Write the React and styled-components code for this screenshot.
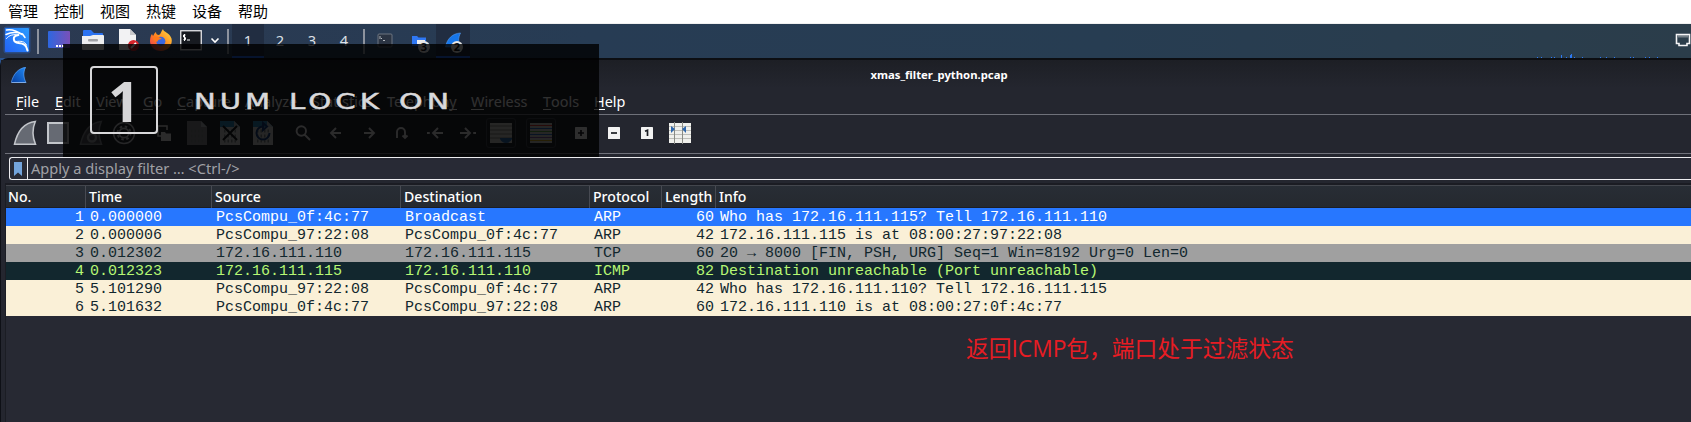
import React from 'react';
import styled, { createGlobalStyle } from 'styled-components';

const GlobalStyle = createGlobalStyle`
  * { box-sizing: border-box; }
  html, body { margin: 0; padding: 0; overflow: hidden; background: #272933; }
  svg { display: block; flex: none; }
`;

const ui = `"Noto Sans", "Noto Sans CJK SC", sans-serif`;

const Screen = styled.div`
  position: relative;
  width: 1691px;
  height: 422px;
  overflow: hidden;
  display: flex;
  flex-direction: column;
  font-family: ${ui};
  background: #2b5490;
`;

/* ---------- host menu ---------- */
const HostMenu = styled.nav`
  flex: none;
  height: 24px;
  padding-left: 8px;
  display: flex;
  gap: 16px;
  background: #fff;
  border-bottom: 1px solid #f0f0f0;
  color: #000;
  font: 15px/22px "Noto Sans CJK SC", sans-serif;
`;
const HostItem = styled.span`
  width: 30px;
  white-space: nowrap;
`;

/* ---------- desktop panel ---------- */
const Panel = styled.header`
  flex: none;
  height: 34px;
  display: flex;
  align-items: stretch;
  background: linear-gradient(90deg, #2b3951 0%, #273c54 35%, #273d52 65%, #2b3d4a 100%);
`;
const PanelSlot = styled.div`
  width: ${(p) => p.$w}px;
  flex: none;
  padding-bottom: 2px;
  display: flex;
  align-items: center;
  justify-content: center;
  background: ${(p) => (p.$active ? '#212d41' : 'transparent')};
  box-shadow: ${(p) => (p.$active ? 'inset 0 -2px #2067ee' : 'none')};
`;
const Divider = styled.div`
  width: 2px;
  height: 25px;
  margin: 5px 3px 0;
  background: #8d939e;
`;
const Workspace = styled(PanelSlot)`
  color: #dce0e6;
  font-size: 14.67px;
  line-height: 31px;
  padding-bottom: 2px;
`;
const Spacer = styled.div`
  flex: 1;
`;
const NetGraph = styled.div`
  width: 124px;
  margin-right: 14px;
  display: flex;
  align-items: flex-end;
`;

/* ---------- window ---------- */
const Window = styled.main`
  flex: 1;
  display: flex;
  flex-direction: column;
  border-left: 1px solid #0e1016;
  border-top: 2px solid #0c0e12;
  border-top-left-radius: 8px;
  background: #24262f;
`;
const TitleBar = styled.div`
  flex: none;
  height: 31px;
  padding: 0 0 2px 10px;
  display: grid;
  grid-template-columns: 16px 1824px;
  align-items: center;
  background: linear-gradient(#1d1f25, #24262f 90%);
`;
const Title = styled.h1`
  margin: 0;
  text-align: center;
  color: #fff;
  font-size: 11.3px;
  font-weight: 700;
  line-height: 16px;
`;
const MenuBar = styled.nav`
  flex: none;
  height: 24px;
  margin-left: 4px;
  padding-left: 11px;
  display: flex;
  border-bottom: 1px solid #6f717a;
  color: #fff;
  font-size: 14.4px;
  line-height: 21px;
`;
const MenuItem = styled.span`
  width: ${(p) => p.$w}px;
  flex: none;
  white-space: nowrap;
`;
const Mnemonic = styled.span`
  display: inline-block;
  height: 19px;
  line-height: 21px;
  border-bottom: 1px solid currentColor;
`;
const ToolBar = styled.div`
  flex: none;
  height: 39px;
  margin-left: 4px;
  padding: 0 0 2px 3px;
  display: flex;
  align-items: center;
  border-bottom: 1px solid #6f717a;
`;
const ToolSlot = styled.div`
  width: 33px;
  height: 30px;
  flex: none;
  margin-left: ${(p) => (p.$gap ? 7 : 0)}px;
  display: flex;
  align-items: center;
  justify-content: center;
`;
const ToggleFrame = styled.div`
  width: 30px;
  height: 30px;
  flex: none;
  display: flex;
  align-items: center;
  justify-content: center;
  border: 1px solid #42454f;
  border-radius: 3px;
`;
const FilterBar = styled.div`
  flex: none;
  height: 23px;
  margin: 3px 0 0 8px;
  display: flex;
  border: 1px solid #ededf0;
  border-right: 0;
  border-radius: 3px 0 0 3px;
  background: #282a35;
`;
const Bookmark = styled.div`
  width: 18px;
  padding-right: 1px;
  border-right: 1px solid #ededf0;
  display: flex;
  align-items: center;
  justify-content: center;
`;
const Placeholder = styled.span`
  padding-left: 3px;
  color: #a0a1a6;
  font-size: 14.6px;
  line-height: 21px;
  white-space: pre;
`;

/* ---------- packet list ---------- */
const PacketList = styled.section`
  flex: 1;
  margin: 3px 0 0 4px;
  border-left: 1px solid #1b1d24;
  border-top: 2px solid #1b1c23;
  background: #272933;
`;
const columns = `80px 126px 189px 189px 72px 54px 1fr`;
const HeaderRow = styled.div`
  display: grid;
  grid-template-columns: ${columns};
  height: 23px;
  border-top: 1px solid #43464d;
  border-bottom: 1px solid #1c1e24;
  background: linear-gradient(#282d35, #25292f);
`;
const HeaderCell = styled.div`
  padding-left: ${(p) => (p.$first ? 2 : 3)}px;
  border-right: 1px solid #474a52;
  color: #fff;
  font-size: 14.1px;
  font-weight: 500;
  line-height: 22px;
  white-space: nowrap;
  &:last-child { border-right: 0; }
`;
const tones = {
  selected: ['#2777ff', '#fff'],
  arp: ['#faf0d7', '#12272e'],
  tcp: ['#a0a0a0', '#12272e'],
  icmp: ['#12272e', '#b7f774'],
};
const PacketRow = styled.div`
  display: grid;
  grid-template-columns: ${columns};
  height: 18px;
  background: ${(p) => tones[p.$tone][0]};
  color: ${(p) => tones[p.$tone][1]};
  font: 15px/19px "Liberation Mono", monospace;
`;
const Cell = styled.span`
  padding: ${(p) => (p.$right ? '0 2px 0 0' : '0 0 0 4px')};
  text-align: ${(p) => (p.$right ? 'right' : 'left')};
  white-space: pre;
`;

/* ---------- overlays ---------- */
const Osd = styled.aside`
  position: absolute;
  left: 63px;
  top: 44px;
  width: 536px;
  height: 113px;
  padding: 22px 0 0 27px;
  display: flex;
  background: rgba(0, 0, 0, 0.81);
`;
const KeyCap = styled.div`
  width: 68px;
  height: 68px;
  flex: none;
  border: 2px solid #d8d8da;
  border-radius: 4px;
  display: flex;
  align-items: center;
  justify-content: center;
`;
const KeyDigit = styled.span`
  color: #d6d6d8;
  font: 700 56px/64px "Open Sans", sans-serif;
`;
const OsdText = styled.div`
  padding: 22px 0 0 36px;
  display: flex;
  color: #d9d9db;
  font: 400 22px/27px "DejaVu Sans", sans-serif;
`;
const OsdWord = styled.span`
  width: ${(p) => p.$w}px;
  flex: none;
  white-space: nowrap;
  letter-spacing: 3px;
  -webkit-text-stroke: 0.5px #d9d9db;
  transform: scaleX(${(p) => p.$stretch});
  transform-origin: left center;
`;
const Annotation = styled.p`
  position: absolute;
  left: 966px;
  top: 332px;
  margin: 0;
  color: #e81c23;
  font: 22.75px/34px "Open Sans", "Noto Sans CJK SC", sans-serif;
  white-space: nowrap;
`;

/* ---------- icons ---------- */
const KaliIcon = () => (
  <svg width="30" height="30" viewBox="0 0 30 30">
    <defs>
      <linearGradient id="kali" x1="0" y1="1" x2="1" y2="0">
        <stop offset="0" stopColor="#2463f5" /><stop offset="1" stopColor="#2a9bff" />
      </linearGradient>
    </defs>
    <rect x="1.5" y="1.5" width="27" height="27" rx="3" fill="#2a6fe8" opacity=".35" />
    <rect x="3" y="3" width="24" height="24" rx="1" fill="url(#kali)" />
    <g fill="none" stroke="#fff" strokeLinecap="round">
      <path d="M4.500 5C9 4 15 6 20 9.500" strokeWidth="1.400" />
      <path d="M4 9.500C9 7 15 7 20.500 9L23 12.500" strokeWidth="1.500" />
      <path d="M4.500 13.500C7 10 12 9 16 10" strokeWidth="1" />
      <path d="M16.500 10C9.500 11 11 17.500 16.500 18C22 18.500 24.500 20 25.500 25.500" strokeWidth="2" />
      <path d="M14 16.500C19 16 22.500 16 24.500 20" strokeWidth="1" />
    </g>
  </svg>
);
const DesktopIcon = () => (
  <svg width="22" height="18" viewBox="0 0 22 18">
    <defs><linearGradient id="dsk"><stop stopColor="#2d67e0" /><stop offset="1" stopColor="#7a50b8" /></linearGradient></defs>
    <rect width="22" height="17" rx="1" fill="url(#dsk)" />
    <path d="M8 14h2v2H8zM11 14h2v2h-2zM14 14h2v2h-2z" fill="#fff" />
  </svg>
);
const FolderIcon = () => (
  <svg width="22" height="20" viewBox="0 0 22 20">
    <path d="M1 1q0-1 1-1h7l3 3h8q1 0 1 1v5H1z" fill="#2b72f0" />
    <path d="M0 6h8l3-1h10q1 0 1 1v13q0 1-1 1H1q-1 0-1-1z" fill="#eeeeef" />
    <rect x="6" y="9" width="10" height="2.400" rx="1" fill="#a2a2a5" />
  </svg>
);
const DocumentIcon = () => (
  <svg width="22" height="22" viewBox="0 0 22 22">
    <path d="M2 0h11l6 6v15H2z" fill="#f2f2f3" />
    <path d="M13 0l6 6h-6z" fill="#c9c9cc" />
    <circle cx="16.500" cy="16.500" r="5.500" fill="#d7252c" />
    <path d="M14 19l5-5" stroke="#fff" strokeWidth="1.800" />
  </svg>
);
const FirefoxIcon = () => (
  <svg width="22" height="23" viewBox="0 0 22 23">
    <defs>
      <linearGradient id="ff" x1="1" y1="0" x2="0" y2="1">
        <stop stopColor="#ffe04a" /><stop offset=".5" stopColor="#ff8a20" /><stop offset="1" stopColor="#f02e55" />
      </linearGradient>
    </defs>
    <path d="M13 0c0 3 7 4 8.500 9.500C23 16 18 22 11 22S0 17 0 12c0-3 1-6 2-7l1 2c1-1 1-3 3-4 0 2 1 3 3 3 2-1 2-4 4-6z" fill="url(#ff)" />
    <circle cx="10.800" cy="12.300" r="4.600" fill="#3a68e0" />
    <path d="M3 8c4-1 6 0 9 2-3 0-4 1-5 3-3-1-4-3-4-5z" fill="#ff7a1c" />
  </svg>
);
const TerminalIcon = () => (
  <svg width="22" height="21" viewBox="0 0 22 21">
    <rect x=".75" y=".75" width="20.500" height="19" fill="#171a20" stroke="#e8e8ea" strokeWidth="1.300" />
    <path d="M5.500 5H3.500v2l2 .6v2h-2M4.500 4v7M7 10h3" fill="none" stroke="#fff" />
  </svg>
);
const ChevronIcon = () => (
  <svg width="10" height="7" viewBox="0 0 10 7"><path d="M1.500 1.500L5 5l3.500-3.500" fill="none" stroke="#fff" strokeWidth="1.600" /></svg>
);
const FadedTerminalIcon = () => (
  <svg width="16" height="15" viewBox="0 0 16 15">
    <rect x="1" y="1" width="14" height="13" rx="1" fill="#2b3443" stroke="#6d7580" />
    <path d="M3 3v3M4 5l1 1M6 7.500h2" stroke="#b0b5bb" fill="none" />
  </svg>
);
const CountBadge = ({ x, n }) => (
  <g>
    <circle cx={x} cy="20" r="6" fill="#e6e6e6" />
    <text x={x} y="24" textAnchor="middle" fontSize="11" fontWeight="700" fontFamily="Noto Sans" fill="#101318">{n}</text>
  </g>
);
const FilesTaskIcon = () => (
  <svg width="22" height="26" viewBox="0 0 22 26">
    <path d="M4 9h5l1.500 1.500H18V19H4z" fill="#2f78f4" />
    <path d="M9 13h8v4H9z" fill="#eee" />
    <CountBadge x="16" n="3" />
  </svg>
);
const SharkTaskIcon = () => (
  <svg width="22" height="26" viewBox="0 0 22 26">
    <path d="M3.500 20C5 12 10 6.500 18.500 6C16 11 16.500 15 17 20z" fill="#1676ea" stroke="#5b9df0" strokeWidth=".6" />
    <CountBadge x="15" n="2" />
  </svg>
);
const EthernetIcon = () => (
  <svg width="16" height="14" viewBox="0 0 16 14">
    <path d="M1.500 1.500h13v9h-2.500v2H4v-2H1.500z" fill="none" stroke="#f4f4f5" strokeWidth="1.600" />
    <path d="M4 2v2.500M6 2v2.500M8 2v2.500M10 2v2.500M12 2v2.500" stroke="#e4e4e5" strokeWidth=".8" />
  </svg>
);
const SharkTitleIcon = () => (
  <svg width="16" height="16" viewBox="0 0 16 16">
    <defs><linearGradient id="fin" x1="1" y1="0" x2="0" y2="1"><stop stopColor="#1f8bf8" /><stop offset="1" stopColor="#073c9c" /></linearGradient></defs>
    <path d="M0 16C2 7 7 1 15 0C12 5 12.500 11 15.500 16z" fill="url(#fin)" />
    <path d="M.4 15.500h14.500" stroke="#9fc2ef" strokeWidth=".8" />
    <path d="M.4 15C2.500 7 7 1.500 14.500.5C12 5 12.500 11 15 15.500" fill="none" stroke="#6aa8f4" strokeWidth=".6" />
  </svg>
);
const FinIcon = ({ gear }) => (
  <svg width="24" height="26" viewBox="0 0 24 26">
    <path d="M1.500 24.200C4 13 10 3 22.300 1.500C19.500 8 19.500 17 22.500 24.200z" fill={gear ? '#50535b' : '#666a73'} stroke={gear ? '#80838a' : '#c3c6cb'} strokeWidth="1.500" />
    {gear && <circle cx="13" cy="17.500" r="4" fill="none" stroke="#9b9da2" strokeWidth="2.400" />}
  </svg>
);
const StopIcon = () => (
  <svg width="22" height="22" viewBox="0 0 22 22"><rect x="1" y="1" width="20" height="20" fill="#666a73" stroke="#c3c6cb" strokeWidth="2" /></svg>
);
const GearIcon = () => (
  <svg width="24" height="24" viewBox="0 0 24 24" fill="none" stroke="#c9cbd0">
    <circle cx="12" cy="12" r="10.500" strokeWidth="1.500" />
    <circle cx="12" cy="12" r="4.700" strokeWidth="1.700" />
    <circle cx="12" cy="12" r="6.500" strokeWidth="2" strokeDasharray="2.500 2.600" />
  </svg>
);
const OpenIcon = () => (
  <svg width="14" height="16" viewBox="0 0 14 16">
    <path d="M4 11H1V1h9v4" fill="none" stroke="#e2e2e4" strokeWidth="1.500" />
    <path d="M4 7h4l1 1.500h5V16H4z" fill="#e2e2e4" />
  </svg>
);
const FileIcon = ({ kind }) => (
  <svg width="20" height="24" viewBox="0 0 20 24">
    <path d="M0 0h14l6 6v18H0z" fill={kind ? '#c7cbc8' : '#85878b'} />
    {kind && <path d="M0 0h14l6 6H0z" fill="#2f83b5" />}
    <path d="M14 0v6h6z" fill="#aeb4b7" />
    <g fill="none" stroke="#7c8082" strokeWidth="3" strokeDasharray="1.500 2">
      <path d="M4 10h13M4 15h13M4 20h13" />
    </g>
    {kind === 'close' && <path d="M3 5l14 14M17 5L3 19" stroke="#14171b" strokeWidth="2" />}
    {kind === 'reload' && <path d="M10 5.500A6.500 6.500 0 1 0 16.500 12M10 2v7l4-3.500z" fill="none" stroke="#173d7a" strokeWidth="2" />}
  </svg>
);
const strokeIcons = {
  search: 'M9.500 9.500L15 15M11 6A4.700 4.700 0 1 1 1.600 6A4.700 4.700 0 1 1 11 6',
  prev: 'M13 8H3M8 3L3 8l5 5',
  next: 'M3 8h10M8 3l5 5l-5 5',
  jump: 'M3 13V7a4 4 0 0 1 8 0v6M8.500 10.500l2.500 2.500l2.500-2.500',
  first: 'M16 8H6M11 3L6 8l5 5M0 8h2.800',
  last: 'M0 8h10M5 3l5 5l-5 5M13.200 8H16',
};
const StrokeIcon = ({ name }) => (
  <svg width="16" height="16" viewBox="0 0 16 16" fill="none" stroke="#e2e2e4" strokeWidth="1.900"><path d={strokeIcons[name]} /></svg>
);
const AutoScrollIcon = () => (
  <svg width="22" height="22" viewBox="0 0 22 22">
    <path d="M0 1h22v20H0z" fill="#c8c8c4" />
    <path d="M0 4h22M0 8h22M0 12h22M0 16h22" stroke="#84857f" />
    <path d="M10 16h12v1q-2 4-6 4t-6-4z" fill="#2d69ac" />
  </svg>
);
const ColorizeIcon = () => (
  <svg width="22" height="22" viewBox="0 0 22 22">
    <path d="M0 1h22v20H0z" fill="#c9c9c5" />
    <path d="M0 3.500h22" stroke="#d43b35" /><path d="M0 6.500h22" stroke="#326cc0" />
    <path d="M0 9.500h22" stroke="#5aa046" /><path d="M0 12.500h22" stroke="#326cc0" />
    <path d="M0 15.500h22" stroke="#80579b" /><path d="M0 18.500h22" stroke="#c8a41f" />
  </svg>
);
const zoomMarks = { in: 'M3 6h6M6 3v6', out: 'M3 6h6', reset: 'M4 4.300L6.500 3.300V9' };
const ZoomIcon = ({ kind }) => (
  <svg width="12" height="12" viewBox="0 0 12 12">
    <rect width="12" height="12" rx=".6" fill="#f2f2f2" />
    <path d={zoomMarks[kind]} fill="none" stroke="#1b1d23" strokeWidth="1.700" />
  </svg>
);
const ResizeIcon = () => (
  <svg width="22" height="22" viewBox="0 0 22 22">
    <path d="M0 1h22v20H0z" fill="#f0f0ec" />
    <path d="M0 4.500h22M0 8.500h22M0 12.500h22M0 16.500h22" stroke="#bebeb9" />
    <path d="M5.500 0v22M13.500 0v22" stroke="#8a8c86" />
    <path d="M2 4l4 3l-4 4zM17 4l-4 3l4 4z" fill="#2f67ac" />
  </svg>
);
const BookmarkIcon = () => (
  <svg width="8" height="14" viewBox="0 0 8 14"><path d="M0 0h8v14l-4-3.500L0 14z" fill="#73a4dc" /></svg>
);
const GraphBars = () => (
  <svg width="124" height="5" viewBox="0 0 124 5" fill="#2b79f5">
    {[[0, 1], [4, 1], [14, 1], [17, 1], [24, 3], [29, 1], [33, 3], [34, 4], [37, 1], [45, 1], [63, 1], [69, 1], [77, 1], [93, 1], [96, 1], [108, 1], [112, 1], [120, 1]].map(([x, h]) => (
      <rect key={x} x={x} y={5 - h} width="1" height={h} />
    ))}
  </svg>
);

/* ---------- data ---------- */
const hostMenu = ['管理', '控制', '视图', '热键', '设备', '帮助'];
const menus = [
  ['File', 39, 0], ['Edit', 41, 0], ['View', 47, 0], ['Go', 34, 0], ['Capture', 68, 0], ['Analyze', 67, 0],
  ['Statistics', 75, 0], ['Telephony', 84, 8], ['Wireless', 72, 0], ['Tools', 51, 0], ['Help', 40, 0],
];
const headers = ['No.', 'Time', 'Source', 'Destination', 'Protocol', 'Length', 'Info'];
const packets = [
  ['selected', '1', '0.000000', 'PcsCompu_0f:4c:77', 'Broadcast', 'ARP', '60', 'Who has 172.16.111.115? Tell 172.16.111.110'],
  ['arp', '2', '0.000006', 'PcsCompu_97:22:08', 'PcsCompu_0f:4c:77', 'ARP', '42', '172.16.111.115 is at 08:00:27:97:22:08'],
  ['tcp', '3', '0.012302', '172.16.111.110', '172.16.111.115', 'TCP', '60', '20 → 8000 [FIN, PSH, URG] Seq=1 Win=8192 Urg=0 Len=0'],
  ['icmp', '4', '0.012323', '172.16.111.115', '172.16.111.110', 'ICMP', '82', 'Destination unreachable (Port unreachable)'],
  ['arp', '5', '5.101290', 'PcsCompu_97:22:08', 'PcsCompu_0f:4c:77', 'ARP', '42', 'Who has 172.16.111.110? Tell 172.16.111.115'],
  ['arp', '6', '5.101632', 'PcsCompu_0f:4c:77', 'PcsCompu_97:22:08', 'ARP', '60', '172.16.111.110 is at 08:00:27:0f:4c:77'],
];

export default function App() {
  return (
    <Screen>
      <GlobalStyle />
      <HostMenu>{hostMenu.map((m) => <HostItem key={m}>{m}</HostItem>)}</HostMenu>
      <Panel>
        <PanelSlot $w={34}><KaliIcon /></PanelSlot>
        <Divider />
        <PanelSlot $w={34}><DesktopIcon /></PanelSlot>
        <PanelSlot $w={34}><FolderIcon /></PanelSlot>
        <PanelSlot $w={36}><DocumentIcon /></PanelSlot>
        <PanelSlot $w={30}><FirefoxIcon /></PanelSlot>
        <PanelSlot $w={29}><TerminalIcon /></PanelSlot>
        <PanelSlot $w={19}><ChevronIcon /></PanelSlot>
        <Divider />
        {[1, 2, 3, 4].map((n) => <Workspace key={n} $w={32} $active={n === 1}>{n}</Workspace>)}
        <Divider />
        <PanelSlot $w={34}><FadedTerminalIcon /></PanelSlot>
        <PanelSlot $w={34}><FilesTaskIcon /></PanelSlot>
        <PanelSlot $w={34} $active><SharkTaskIcon /></PanelSlot>
        <Spacer />
        <NetGraph><GraphBars /></NetGraph>
        <PanelSlot $w={16}><EthernetIcon /></PanelSlot>
      </Panel>
      <Window>
        <TitleBar>
          <SharkTitleIcon />
          <Title>xmas_filter_python.pcap</Title>
        </TitleBar>
        <MenuBar>
          {menus.map(([label, w, key]) => (
            <MenuItem key={label} $w={w}>
              {label.slice(0, key)}<Mnemonic>{label[key]}</Mnemonic>{label.slice(key + 1)}
            </MenuItem>
          ))}
        </MenuBar>
        <ToolBar>
          <ToolSlot><FinIcon /></ToolSlot>
          <ToolSlot><StopIcon /></ToolSlot>
          <ToolSlot><FinIcon gear /></ToolSlot>
          <ToolSlot><GearIcon /></ToolSlot>
          <ToolSlot $gap><OpenIcon /></ToolSlot>
          <ToolSlot><FileIcon /></ToolSlot>
          <ToolSlot><FileIcon kind="close" /></ToolSlot>
          <ToolSlot><FileIcon kind="reload" /></ToolSlot>
          <ToolSlot $gap><StrokeIcon name="search" /></ToolSlot>
          <ToolSlot><StrokeIcon name="prev" /></ToolSlot>
          <ToolSlot><StrokeIcon name="next" /></ToolSlot>
          <ToolSlot><StrokeIcon name="jump" /></ToolSlot>
          <ToolSlot><StrokeIcon name="first" /></ToolSlot>
          <ToolSlot><StrokeIcon name="last" /></ToolSlot>
          <ToolSlot><ToggleFrame><AutoScrollIcon /></ToggleFrame></ToolSlot>
          <ToolSlot $gap><ToggleFrame><ColorizeIcon /></ToggleFrame></ToolSlot>
          <ToolSlot $gap><ZoomIcon kind="in" /></ToolSlot>
          <ToolSlot><ZoomIcon kind="out" /></ToolSlot>
          <ToolSlot><ZoomIcon kind="reset" /></ToolSlot>
          <ToolSlot><ResizeIcon /></ToolSlot>
        </ToolBar>
        <FilterBar>
          <Bookmark><BookmarkIcon /></Bookmark>
          <Placeholder>Apply a display filter … &lt;Ctrl-/&gt;</Placeholder>
        </FilterBar>
        <PacketList>
          <HeaderRow>
            {headers.map((h, i) => <HeaderCell key={h} $first={i === 0}>{h}</HeaderCell>)}
          </HeaderRow>
          {packets.map(([tone, ...cells]) => (
            <PacketRow key={cells[0]} $tone={tone}>
              {cells.map((c, i) => <Cell key={i} $right={i === 0 || i === 5}>{c}</Cell>)}
            </PacketRow>
          ))}
        </PacketList>
      </Window>
      <Osd>
        <KeyCap><KeyDigit>1</KeyDigit></KeyCap>
        <OsdText>
          <OsdWord $w={95} $stretch={1.32}>NUM</OsdWord>
          <OsdWord $w={110} $stretch={1.33}>LOCK</OsdWord>
          <OsdWord $w={50} $stretch={1.36}>ON</OsdWord>
        </OsdText>
      </Osd>
      <Annotation>返回ICMP包，端口处于过滤状态</Annotation>
    </Screen>
  );
}
